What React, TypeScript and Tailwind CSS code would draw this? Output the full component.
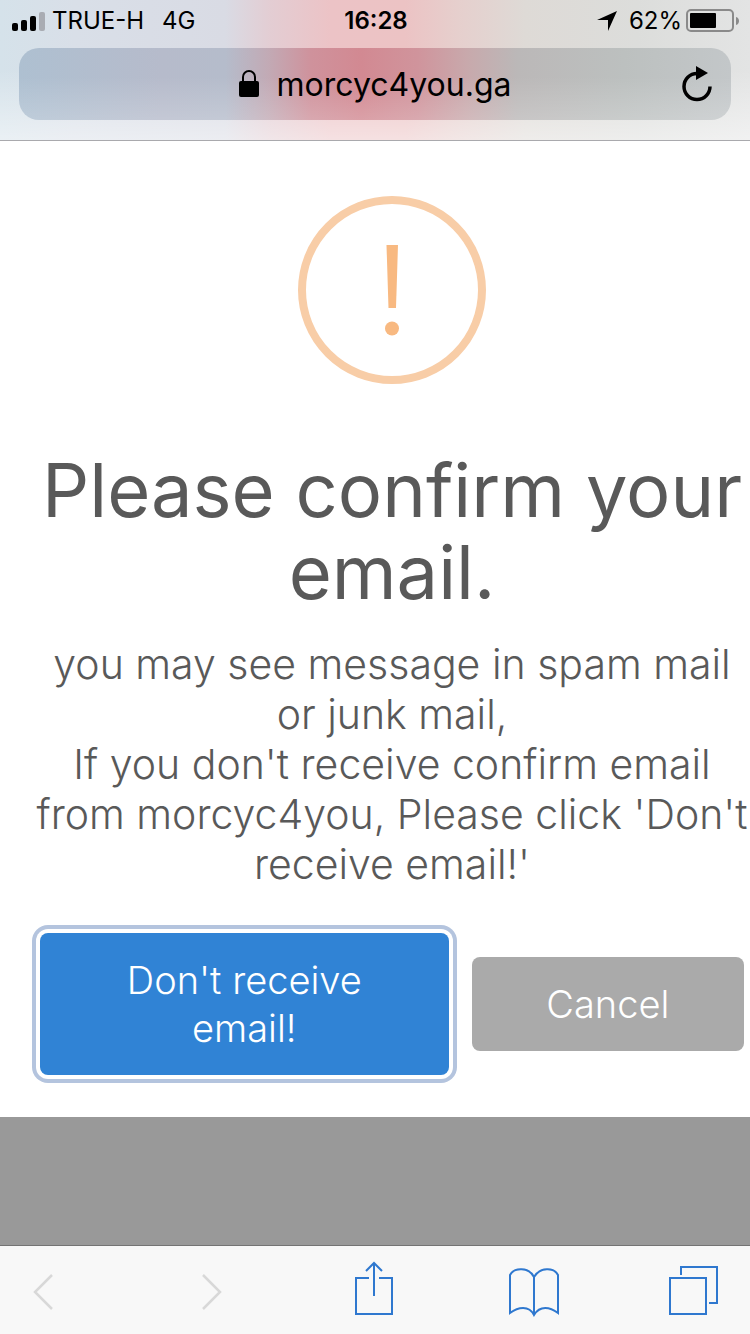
import React from "react";

function SignalIcon() {
  return (
    <svg width="34" height="22" viewBox="0 0 34 22" aria-hidden="true">
      <rect x="0" y="13" width="6" height="8" rx="2" />
      <rect x="9" y="10" width="6" height="11" rx="2" />
      <rect x="18" y="6" width="6" height="15" rx="2" />
      <rect x="27" y="2" width="6" height="19" rx="2" fill="#a9acb3" />
    </svg>
  );
}

function BatteryIcon() {
  return (
    <svg width="54" height="24" viewBox="0 0 54 24" aria-hidden="true">
      <rect x="1" y="1" width="46" height="21" rx="4" fill="none" stroke="#8a8a8a" strokeWidth="2" />
      <rect x="4" y="4" width="26" height="15" rx="1" />
      <path d="M50 8c4 1 4 7 0 8z" fill="#8a8a8a" />
    </svg>
  );
}

function StatusBar() {
  return (
    <div className="grid h-10 grid-cols-3 items-center pl-3 pr-2.5 pt-0.5 text-2xl text-black">
      <div className="flex items-center gap-1.5">
        <SignalIcon />
        <span>TRUE-H</span>
        <span className="pl-3">4G</span>
      </div>
      <time className="text-center font-semibold">16:28</time>
      <div className="flex items-center justify-end gap-1">
        <svg width="20" height="20" viewBox="0 0 20 20" className="mr-2" aria-hidden="true">
          <path d="M20 0L11 20V9H0z" />
        </svg>
        <span>62%</span>
        <BatteryIcon />
      </div>
    </div>
  );
}

function AddressBar() {
  return (
    <div className="relative mx-[19px] flex h-[72px] items-center justify-center rounded-[20px] bg-[linear-gradient(180deg,rgba(255,255,255,0)_40%,rgba(255,255,255,0.2)_100%),linear-gradient(90deg,#aec0d1_0%,#b6bbcb_20%,#b5bccb_29%,#c2aab5_35%,#cf929c_41%,#d28992_48%,#d0949c_56%,#c8a9ac_63%,#bbb8b8_70%,#bcc0bf_85%,#c3c7c9_100%)]">
      <button type="button" className="flex items-center gap-[18px] pt-0.5 text-[32px] leading-10 text-black">
        <svg width="20" height="28" viewBox="0 0 20 28" className="mb-0.5" aria-hidden="true">
          <path d="M4 12V7a6 6 0 0 1 12 0v5" fill="none" stroke="#000" strokeWidth="2" />
          <rect x="0" y="11" width="20" height="16" rx="2" />
        </svg>
        morcyc4you.ga
      </button>
      <button type="button" aria-label="Reload" className="absolute right-[18px] top-[17px]">
        <svg width="32" height="37" viewBox="0 0 32 37" aria-hidden="true">
          <path d="M29 21.500a13 13 0 1 1-13-13" fill="none" stroke="#000" strokeWidth="3.500" />
          <path d="M15 1L27 8L15 15z" />
        </svg>
      </button>
    </div>
  );
}

function WarningIcon() {
  return (
    <svg width="188" height="188" viewBox="0 0 188 188" role="img" aria-label="Warning">
      <circle cx="94" cy="94" r="90" fill="none" stroke="#f8cda7" strokeWidth="8" />
      <path d="M88.500 49h11.500l-2 63h-7.500z" fill="#f8b981" />
      <circle cx="94" cy="132.500" r="7" fill="#f8b981" />
    </svg>
  );
}

function ConfirmDialog() {
  return (
    <section role="dialog" aria-labelledby="dialog-title" className="overflow-hidden bg-white pb-[42px] pt-[55px]">
      <div className="flex flex-col items-center pl-[34px] text-center text-[#595959]">
        <WarningIcon />
        <h1 id="dialog-title" className="mt-[65px] whitespace-nowrap text-[74px] font-normal leading-[82px]">
          Please confirm your
          <br />
          email.
        </h1>
        <p className="mt-[26px] whitespace-nowrap text-[41px] font-light leading-[50px]">
          you may see message in spam mail
          <br />
          or junk mail,
          <br />
          If you don't receive confirm email
          <br />
          from morcyc4you, Please click 'Don't
          <br />
          receive email!'
        </p>
      </div>
      <div className="mt-[44px] grid grid-cols-[3fr_2fr] items-center gap-[23px] pl-10 pr-1.5 text-[38px] font-light text-white">
        <button
          type="button"
          className="rounded-lg bg-[#3083d5] px-16 py-[23px] leading-[48px] shadow-[0_0_0_4px_#fff,0_0_0_8px_#b4c4de]"
        >
          Don't receive
          <br />
          email!
        </button>
        <button type="button" className="rounded-lg bg-[#aaa] px-8 py-[23px] leading-[48px]">
          Cancel
        </button>
      </div>
    </section>
  );
}

function Toolbar() {
  return (
    <nav className="flex h-[89px] items-center justify-between border-t border-[#747474] bg-[#f8f8f8] px-8 pt-1">
      <button type="button" aria-label="Back" className="w-[50px]" disabled>
        <svg width="22" height="36" viewBox="0 0 22 36" fill="none" stroke="#d8d8d8" strokeWidth="2.500" aria-hidden="true">
          <path d="M20 1L3 18L20 35" />
        </svg>
      </button>
      <button type="button" aria-label="Forward" className="w-[50px] pl-2.5" disabled>
        <svg width="22" height="36" viewBox="0 0 22 36" fill="none" stroke="#d8d8d8" strokeWidth="2.500" aria-hidden="true">
          <path d="M2 1L19 18L2 35" />
        </svg>
      </button>
      <button type="button" aria-label="Share" className="flex w-[50px] justify-center pb-2">
        <svg width="40" height="54" viewBox="0 0 40 54" fill="none" stroke="#2f78cf" strokeWidth="2" aria-hidden="true">
          <path d="M14 17H1V53H37V17H24" />
          <path d="M19 35V3M11 10L19 2L27 10" />
        </svg>
      </button>
      <button type="button" aria-label="Bookmarks" className="w-[50px]">
        <svg width="52" height="50" viewBox="0 0 52 50" fill="none" stroke="#2f78cf" strokeWidth="2" aria-hidden="true">
          <path d="M25 10C20 0 5 0 1 8V46C9 40 20 38 25 48C31 38 41 40 49 46V8C45 0 31 0 25 10V48" />
        </svg>
      </button>
      <button type="button" aria-label="Tabs" className="w-[50px] pb-1">
        <svg width="50" height="50" viewBox="0 0 50 50" fill="none" stroke="#2f78cf" strokeWidth="2" aria-hidden="true">
          <rect x="2" y="13" width="36" height="36" />
          <path d="M13 10V2H49V38H41" />
        </svg>
      </button>
    </nav>
  );
}

export default function App() {
  return (
    <div className="flex min-h-screen flex-col bg-[#999] font-['Inter','Liberation_Sans',sans-serif]">
      <header className="border-b border-[#a9a9ad] bg-[linear-gradient(180deg,rgba(255,255,255,0)_50%,rgba(255,255,255,0.5)_100%),linear-gradient(90deg,#d5e2ea_0%,#d9dfe8_10%,#d9dbe4_30%,#e3cdd3_36%,#ecc3c6_44%,#ecc3c4_54%,#e6cfcd_61%,#dedad6_70%,#dcdddb_85%,#e3e4e4_100%)] pb-5">
        <StatusBar />
        <div className="pt-2">
          <AddressBar />
        </div>
      </header>
      <main className="flex-1">
        <ConfirmDialog />
      </main>
      <Toolbar />
    </div>
  );
}
